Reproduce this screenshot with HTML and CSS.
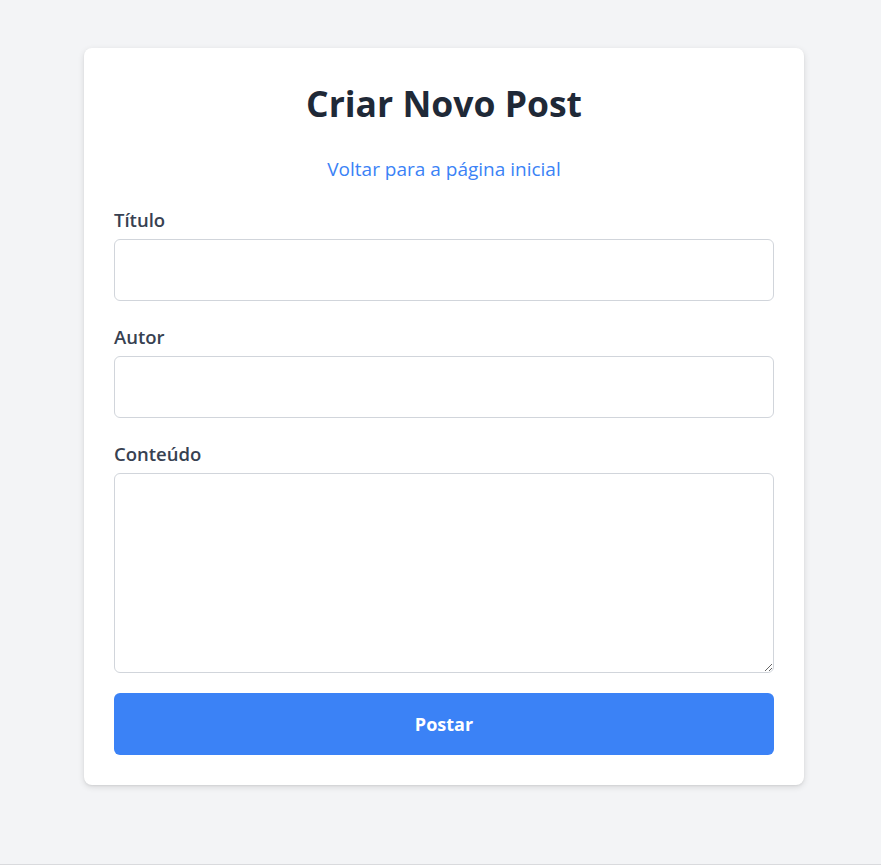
FILE: index.html
```html
<!DOCTYPE html>
<html lang="pt-BR">
<head>
<meta charset="utf-8">
<title>Criar Novo Post</title>
<link rel="stylesheet" href="styles.css">
</head>
<body>
<div class="page">
  <main class="card">
    <h1 class="title">Criar Novo Post</h1>
    <a class="back" href="#">Voltar para a página inicial</a>
    <form class="form">
      <div class="group">
        <label class="label" for="titulo">Título</label>
        <input class="field" id="titulo" type="text">
      </div>
      <div class="group">
        <label class="label" for="autor">Autor</label>
        <input class="field" id="autor" type="text">
      </div>
      <div class="group group-last">
        <label class="label" for="conteudo">Conteúdo</label>
        <textarea class="field area" id="conteudo"></textarea>
      </div>
      <button class="submit" type="button">Postar</button>
    </form>
  </main>
</div>
</body>
</html>
```
FILE: styles.css
```css
* { box-sizing: border-box; }
html, body {
  margin: 0;
  padding: 0;
  background: #f3f4f6;
  font-family: "Open Sans", "Noto Sans", sans-serif;
}
.page {
  height: 865px;
  border-bottom: 1px solid #d9dadd;
  display: flex;
  justify-content: center;
  align-items: flex-start;
  padding: 48px 0 0 7px;
}
.card {
  width: 720px;
  background: #ffffff;
  border-radius: 8px;
  box-shadow: 0 2px 6px rgba(0, 0, 0, 0.12), 0 1px 2px rgba(0, 0, 0, 0.06);
  padding: 30px;
  display: flex;
  flex-direction: column;
}
.title {
  margin: 0;
  text-align: center;
  font-size: 35.5px;
  line-height: 50px;
  font-weight: 700;
  color: #1f2937;
}
.back {
  align-self: center;
  margin-top: 28px;
  font-size: 19px;
  line-height: 27px;
  color: #3b82f6;
  text-decoration: none;
}
.form {
  margin-top: 25px;
  display: flex;
  flex-direction: column;
}
.group {
  display: flex;
  flex-direction: column;
  margin-bottom: 24px;
}
.group-last { margin-bottom: 20px; }
.label {
  font-size: 18.5px;
  line-height: 24px;
  font-weight: 600;
  color: #374151;
  margin-bottom: 7px;
}
.field {
  width: 100%;
  height: 62px;
  border: 1px solid #d1d5db;
  border-radius: 6px;
  font: inherit;
  font-size: 18px;
  padding: 8px 12px;
  background: #fff;
  margin: 0;
}
.area {
  height: 200px;
  resize: vertical;
  display: block;
}
.submit {
  height: 62px;
  width: 100%;
  border: none;
  border-radius: 6px;
  background: #3b82f6;
  color: #fff;
  font: inherit;
  font-size: 18px;
  font-weight: 700;
  cursor: pointer;
}
```
